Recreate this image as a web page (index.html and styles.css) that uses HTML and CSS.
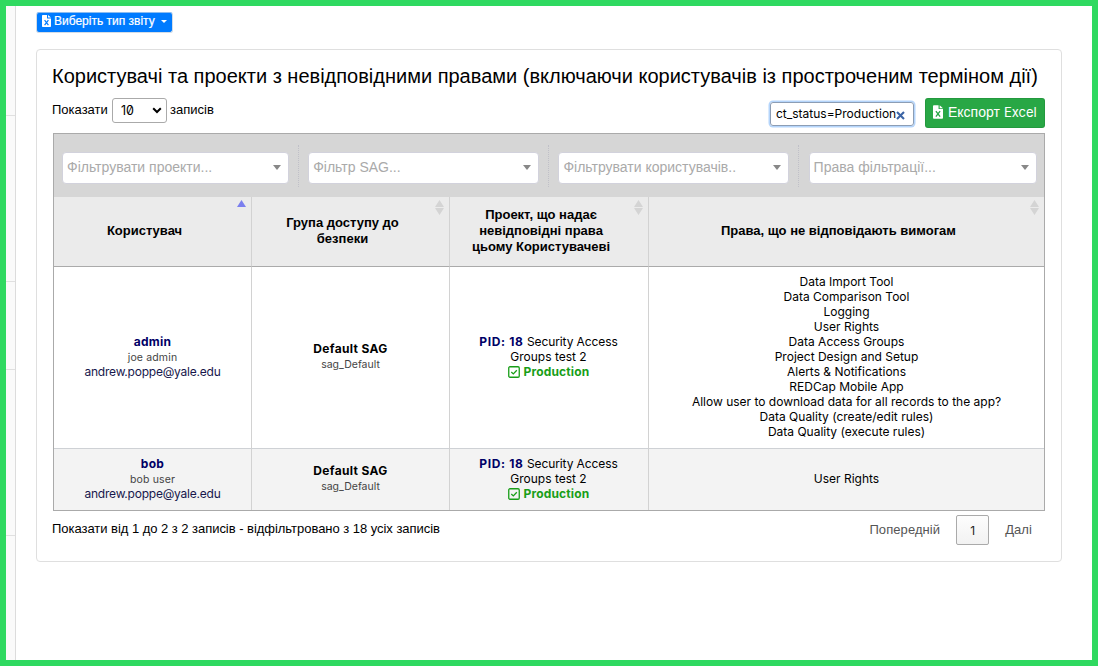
FILE: index.html
```html
<!DOCTYPE html>
<html lang="uk">
<head>
<meta charset="utf-8">
<title>Звіт</title>
<link rel="stylesheet" href="styles.css">
</head>
<body>
<div class="app">
  <aside class="sidebar"><i></i><i></i><i></i><i></i></aside>
  <main class="main">
    <button class="report-btn">
      <svg class="file-icon" viewBox="0 0 9 12"><path fill="#fff" d="M0 .8Q0 0 .8 0H5v3.4h4v7.8q0 .8-.8.8H.8Q0 12 0 11.2zM6 0l3 2.6H6z"/><path stroke="#007bff" stroke-width="1.2" d="M2.6 5.2l3.8 5M6.4 5.2l-3.8 5"/></svg>
      <span class="report-label">Виберіть тип звіту</span><span class="caret"></span>
    </button>
    <section class="panel">
      <h1 class="title">Користувачі та проекти з невідповідними правами (включаючи користувачів із простроченим терміном дії)</h1>
      <div class="toolbar">
        <span class="len-a">Показати</span>
        <span class="length"><span class="lat ten">10</span><svg width="10" height="7" viewBox="0 0 10 7"><path d="M1.2 1.3L5 5l3.8-3.7" fill="none" stroke="#000" stroke-width="2"/></svg></span>
        <span class="len-b">записів</span>
        <div class="search"><span class="lat search-text">ct_status=Production</span><svg width="9" height="9" viewBox="0 0 9 9"><path d="M1 1l7 7M8 1L1 8" stroke="#3c64a5" stroke-width="2.1"/></svg></div>
        <button class="excel-btn">
          <svg class="file-icon big" viewBox="0 0 9 12"><path fill="#fff" d="M0 .8Q0 0 .8 0H5v3.4h4v7.8q0 .8-.8.8H.8Q0 12 0 11.2zM6 0l3 2.6H6z"/><path stroke="#28a745" stroke-width="1.2" d="M2.6 5.2l3.8 5M6.4 5.2l-3.8 5"/></svg>
          <span class="export-word">Експорт</span><span class="lat excel-word">Excel</span>
        </button>
      </div>
      <div class="grid">
        <div class="filters">
          <div class="filter"><span>Фільтрувати проекти...</span><b></b></div><i class="sep"></i>
          <div class="filter"><span>Фільтр SAG...</span><b></b></div><i class="sep"></i>
          <div class="filter"><span>Фільтрувати користувачів..</span><b></b></div><i class="sep"></i>
          <div class="filter"><span>Права фільтрації...</span><b></b></div>
        </div>
        <table class="table">
          <colgroup><col class="c1"><col class="c2"><col class="c3"><col class="c4"></colgroup>
          <thead><tr>
            <th><svg class="sort" viewBox="0 0 9 15"><path fill="#7b7fee" d="M4.5 0L9 7H0z"/></svg>Користувач</th>
            <th><svg class="sort" viewBox="0 0 9 15"><path fill="#d4d4d4" d="M4.5 0L9 7H0zM0 8h9l-4.500 7z"/></svg>Група доступу до<br>безпеки</th>
            <th><svg class="sort" viewBox="0 0 9 15"><path fill="#d4d4d4" d="M4.500 0L9 7H0zM0 8h9l-4.500 7z"/></svg>Проект, що надає<br>невідповідні права<br>цьому Користувачеві</th>
            <th><svg class="sort" viewBox="0 0 9 15"><path fill="#d4d4d4" d="M4.500 0L9 7H0zM0 8h9l-4.500 7z"/></svg>Права, що не відповідають вимогам</th>
          </tr></thead>
          <tbody>
            <tr class="row-a">
              <td><div class="l navy strong"><span class="w-admin">admin</span></div><div class="l small"><span class="w-joe">joe admin</span></div><div class="l mail"><span class="w-mail">andrew.poppe@yale.edu</span></div></td>
              <td><div class="l strong"><span class="w-sag">Default SAG</span></div><div class="l small"><span class="w-sagd">sag_Default</span></div></td>
              <td><div class="l"><span class="navy strong w-pid">PID: 18</span> <span class="w-sec">Security Access</span></div><div class="l"><span class="w-grp">Groups test 2</span></div><div class="l green strong"><svg class="check" viewBox="0 0 12 12"><rect x=".75" y=".75" width="10.500" height="10.500" rx="1.200" fill="none" stroke="#189e18" stroke-width="1.300"/><path d="M3.300 6l2 1.900 3.500-3.700" fill="none" stroke="#189e18" stroke-width="1.300"/></svg><span class="w-prod">Production</span></div></td>
              <td class="rights"><div class="l">Data Import Tool</div><div class="l">Data Comparison Tool</div><div class="l">Logging</div><div class="l">User Rights</div><div class="l">Data Access Groups</div><div class="l">Project Design and Setup</div><div class="l">Alerts &amp; Notifications</div><div class="l">REDCap Mobile App</div><div class="l">Allow user to download data for all records to the app?</div><div class="l">Data Quality (create/edit rules)</div><div class="l">Data Quality (execute rules)</div></td>
            </tr>
            <tr class="row-b">
              <td><div class="l navy strong"><span class="w-admin">bob</span></div><div class="l small"><span class="w-joe">bob user</span></div><div class="l mail"><span class="w-mail">andrew.poppe@yale.edu</span></div></td>
              <td><div class="l strong"><span class="w-sag">Default SAG</span></div><div class="l small"><span class="w-sagd">sag_Default</span></div></td>
              <td><div class="l"><span class="navy strong w-pid">PID: 18</span> <span class="w-sec">Security Access</span></div><div class="l"><span class="w-grp">Groups test 2</span></div><div class="l green strong"><svg class="check" viewBox="0 0 12 12"><rect x=".75" y=".75" width="10.500" height="10.500" rx="1.200" fill="none" stroke="#189e18" stroke-width="1.300"/><path d="M3.300 6l2 1.900 3.500-3.700" fill="none" stroke="#189e18" stroke-width="1.300"/></svg><span class="w-prod">Production</span></div></td>
              <td class="rights"><div class="l">User Rights</div></td>
            </tr>
          </tbody>
        </table>
      </div>
      <div class="footer">
        <span class="info">Показати від 1 до 2 з 2 записів - відфільтровано з 18 усіх записів</span>
        <span class="prev">Попередній</span><span class="page lat">1</span><span class="next">Далі</span>
      </div>
    </section>
  </main>
</div>
</body>
</html>
```
FILE: styles.css
```css
* { box-sizing: border-box; }
body { margin: 0; font-family: "Liberation Sans", sans-serif; font-size: 13px; color: #000; background: #fff; }
.app { display: flex; width: 1098px; height: 666px; border: 6px solid #2fd960; overflow: hidden; white-space: nowrap; }
.sidebar { width: 10px; background: #fafafa; border-right: 1px solid #dcdcdc; display: grid; grid-template-rows: 110px 166px 88px 166px; }
.sidebar i { border-bottom: 1px solid #e0e0e0; }
.main { padding: 6px 0 0 20px; }
.lat, td { font-family: Inter, sans-serif; }
button { border: 0; margin: 0; font-family: inherit; }

.report-btn { display: flex; align-items: flex-start; width: 137px; height: 21px; padding: 2px 0 0 5px; margin-bottom: 16px; background: #007bff; border: 1px solid #d3dce6; border-top-color: #8cbcf0; border-radius: 3px; color: #fff; font-size: 12px; line-height: 13px; }
.file-icon { width: 9px; height: 12px; flex: none; margin-right: 3px; }
.report-label { -webkit-text-stroke: .2px #fff; }
.caret { margin: 5px 0 0 6px; border: 3px solid transparent; border-top-color: #fff; border-bottom: 0; }

.panel { width: 1026px; height: 513px; border: 1px solid #dfdfdf; border-radius: 4px; padding: 12px 16px 0 15px; }
.title { margin: 0 0 9px; font-size: 20px; font-weight: 400; line-height: 28px; width: 1000px; }
.toolbar { display: flex; height: 39px; margin-top: -5px; }
.len-a { padding-top: 8px; width: 60px; line-height: 15px; }
.length { display: flex; justify-content: space-between; align-items: center; width: 55px; height: 25px; margin-top: 4px; padding: 0 4px 0 8px; border: 1px solid #aaa; border-radius: 3px; }
.ten { font-size: 12.500px; font-feature-settings: "zero"; }
.len-b { padding: 8px 0 0 3px; line-height: 15px; }
.search { display: flex; align-items: center; margin: 8px 11px 0 auto; width: 144px; height: 24px; padding: 0 0 1px 5px; border: 1px solid #8c9db4; border-radius: 3px; box-shadow: 0 0 0 1.500px #b5d5fb; font-size: 12px; }
.search-text { width: 120px; }
.search svg { margin-top: 3px; }
.excel-btn { display: flex; align-items: flex-start; width: 120px; height: 30px; margin: 4px 0 0; padding: 7px 0 0 8px; background: #28a745; border-radius: 3px; color: #fff; font-size: 14px; line-height: 15px; box-shadow: inset 0 0 0 1px rgba(0,60,20,.12); }
.file-icon.big { width: 10px; height: 14px; margin-right: 5px; }
.excel-word { margin-left: 4px; font-size: 13px; }

.grid { width: 992px; height: 378px; margin-left: 1px; border: 1px solid #aaa; }
.filters { display: grid; grid-template-columns: 227px 1px 231px 1px 231px 1px 228px; column-gap: 9.100px; height: 63px; padding: 18px 0 0 8px; background: #d6d6d6; }
.filter { display: flex; justify-content: space-between; align-items: center; height: 32px; padding: 0 7px 3px 4px; border: 1px solid #d2d2dc; border-radius: 4px; background: #fff; color: #aaa; font-size: 14px; }
.filter b { margin-top: 2px; border: 4px solid transparent; border-top: 5px solid #888; border-bottom: 0; }
.sep { height: 42px; margin-top: -7px; border-left: 1px dotted #c0c0c8; }
.table { width: 990px; table-layout: fixed; border-collapse: separate; border-spacing: 0; text-align: center; }
.c1 { width: 197px; }
.c2 { width: 198px; }
.c3 { width: 199px; }
th { position: relative; height: 70px; padding: 0 16px 1px 0; background: #ebebeb; border-bottom: 1px solid #aaa; font-size: 13px; line-height: 16px; vertical-align: middle; }
.sort { position: absolute; right: 5px; top: 3px; width: 9px; height: 15px; }
th + th, td + td { border-left: 1px solid #d2d2d2; }
td { padding: 0 0 2px; vertical-align: middle; font-size: 12px; }
td:nth-child(2) { padding-bottom: 4px; }
td:nth-child(3) { padding-right: 1px; }
.row-a td { height: 181px; }
.row-b td { height: 62px; background: #f3f3f3; border-top: 1px solid #ced1d5; }
.l { height: 15px; line-height: 15px; }
.small { font-size: 10.500px; color: #444; padding-top: 1px; }
.strong { font-weight: 700; }
.navy { color: #000066; }
.mail { color: #17174c; }
.green { color: #189e18; }
.check { width: 12px; height: 12px; margin-right: 4px; vertical-align: -2px; }
.w-admin { letter-spacing: .3px; }
.w-joe { letter-spacing: .15px; }
.w-mail { letter-spacing: -.22px; }
.w-sag { letter-spacing: .35px; }
.w-pid { letter-spacing: .65px; }
.w-sec { letter-spacing: -.1px; }
.w-prod { letter-spacing: .15px; }

.footer { display: flex; align-items: flex-start; height: 40px; padding: 4px 0 0; }
.info { padding-top: 6px; line-height: 15px; margin-right: auto; letter-spacing: -.035px; }
.prev, .next { padding-top: 7px; line-height: 15px; color: #555; font-size: 13px; letter-spacing: .08px; }
.page { width: 33px; height: 30px; margin: 0 16px; border: 1px solid #aaa; border-radius: 2px; background: linear-gradient(#fdfdfd, #f2f2f2); text-align: center; line-height: 29px; font-size: 12px; color: #222; }
.next { margin-right: 13px; }
```
